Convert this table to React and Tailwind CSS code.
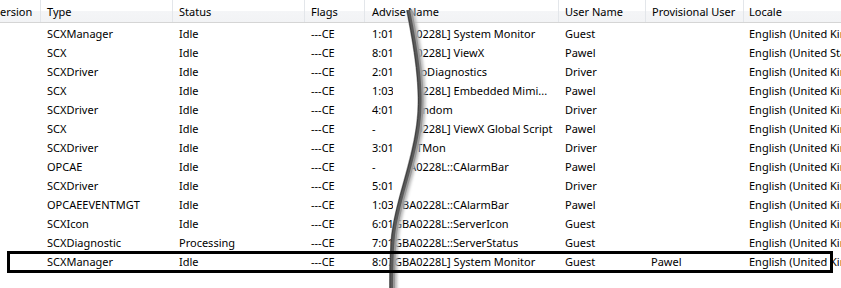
import React from "react";

const rows = [
  ["SCXManager", "Idle", "1:01", "GBA0228L] System Monitor", "Guest", "", "English (United Kingdom)"],
  ["SCX", "Idle", "8:01", "GBA0228L] ViewX", "Pawel", "", "English (United States)"],
  ["SCXDriver", "Idle", "2:01", "MemoDiagnostics", "Driver", "", "English (United Kingdom)"],
  ["SCX", "Idle", "1:03", "GBA0228L] Embedded Mimi...", "Pawel", "", "English (United Kingdom)"],
  ["SCXDriver", "Idle", "4:01", "OPRandom", "Driver", "", "English (United Kingdom)"],
  ["SCX", "Idle", "-", "GBA0228L] ViewX Global Script", "Pawel", "", "English (United Kingdom)"],
  ["SCXDriver", "Idle", "3:01", "OPCTMon", "Driver", "", "English (United Kingdom)"],
  ["OPCAE", "Idle", "-", "GBA0228L::CAlarmBar", "Pawel", "", "English (United Kingdom)"],
  ["SCXDriver", "Idle", "5:01", "", "Driver", "", "English (United Kingdom)"],
  ["OPCAEEVENTMGT", "Idle", "1:03", "GBA0228L::CAlarmBar", "Pawel", "", "English (United Kingdom)"],
  ["SCXIcon", "Idle", "6:01", "GBA0228L::ServerIcon", "Guest", "", "English (United Kingdom)"],
  ["SCXDiagnostic", "Processing", "7:01", "GBA0228L::ServerStatus", "Guest", "", "English (United Kingdom)"],
  ["SCXManager", "Idle", "8:07", "GBA0228L] System Monitor", "Guest", "Pawel", "English (United Kingdom)"],
];

const TEAR =
  "M409,10 C416,45 424,90 419,125 C414,165 398,200 394,235 C392,255 392,275 392,292";

const Sep = () => <div className="w-px self-stretch bg-[#e3e6ea]" />;

const Tear = () => (
  <svg className="absolute left-0 top-0" width="841" height="288" viewBox="0 0 841 288">
    <defs>
      <clipPath id="rowsClip">
        <rect x="393" y="23" width="448" height="265" />
      </clipPath>
      <filter id="soft" x="-50%" y="-10%" width="200%" height="120%">
        <feGaussianBlur stdDeviation="1.5" />
      </filter>
    </defs>
    {/* hides the start of the Name column */}
    <g clipPath="url(#rowsClip)">
      <path d={TEAR + " L380,292 L380,10 Z"} transform="translate(-2 0)" fill="#fff" />
    </g>
    {/* shadow */}
    <path d={TEAR} transform="translate(3 0)" stroke="#b5b5b5" strokeWidth="4" fill="none" filter="url(#soft)" />
    <path d={TEAR} stroke="#9a9a9a" strokeWidth="6" fill="none" />
    <path d={TEAR} transform="translate(-0.5 0)" stroke="#5a5a5a" strokeWidth="3" fill="none" />
    <path d={TEAR} transform="translate(-2 0)" stroke="#3c3c3c" strokeWidth="1" fill="none" />
  </svg>
);

export default function App() {
  return (
    <div
      className="relative w-[841px] h-[288px] overflow-hidden bg-white text-[11px] text-black"
      style={{ fontFamily: '"Noto Sans", "Liberation Sans", sans-serif' }}
    >
      {/* header */}
      <div className="flex h-[23px] border-b border-[#d5d5d5] bg-[linear-gradient(#ffffff_0%,#ffffff_50%,#f4f5f7_51%,#f2f3f5_100%)] whitespace-nowrap leading-[23px]">
        <div className="w-[40px] shrink-0">ersion</div>
        <Sep />
        <div className="w-[131px] shrink-0 pl-[6px]">Type</div>
        <Sep />
        <div className="w-[131px] shrink-0 pl-[6px]">Status</div>
        <Sep />
        <div className="w-[59px] shrink-0 pl-[6px]">Flags</div>
        <Sep />
        <div className="w-[29px] shrink-0 pl-[7px] overflow-visible">Advise</div>
        <div className="w-[164px] shrink-0 pl-[14px]">Name</div>
        <Sep />
        <div className="w-[86px] shrink-0 pl-[6px]">User Name</div>
        <Sep />
        <div className="w-[97px] shrink-0 pl-[6px]">Provisional User</div>
        <Sep />
        <div className="shrink-0 pl-[5px]">Locale</div>
      </div>

      {/* rows */}
      {rows.map((r, i) => (
        <div key={i} className="flex h-[19px] leading-[21px] whitespace-nowrap">
          <div className="w-[47px] shrink-0" />
          <div className="w-[132px] shrink-0">{r[0]}</div>
          <div className="w-[132px] shrink-0">{r[1]}</div>
          <div className="w-[61px] shrink-0">---CE</div>
          <div className="w-[22px] shrink-0 overflow-visible">{r[2]}</div>
          <div className="w-[164px] shrink-0 overflow-hidden">{r[3]}</div>
          <div className="w-[7px] shrink-0" />
          <div className="w-[86px] shrink-0">{r[4]}</div>
          <div className="w-[98px] shrink-0">{r[5]}</div>
          <div className="shrink-0">{r[6]}</div>
        </div>
      ))}

      <Tear />

      {/* selection outline drawn on top */}
      <div className="absolute left-[7px] top-[251px] w-[826px] h-[22px] border-[3px] border-black" />
    </div>
  );
}
